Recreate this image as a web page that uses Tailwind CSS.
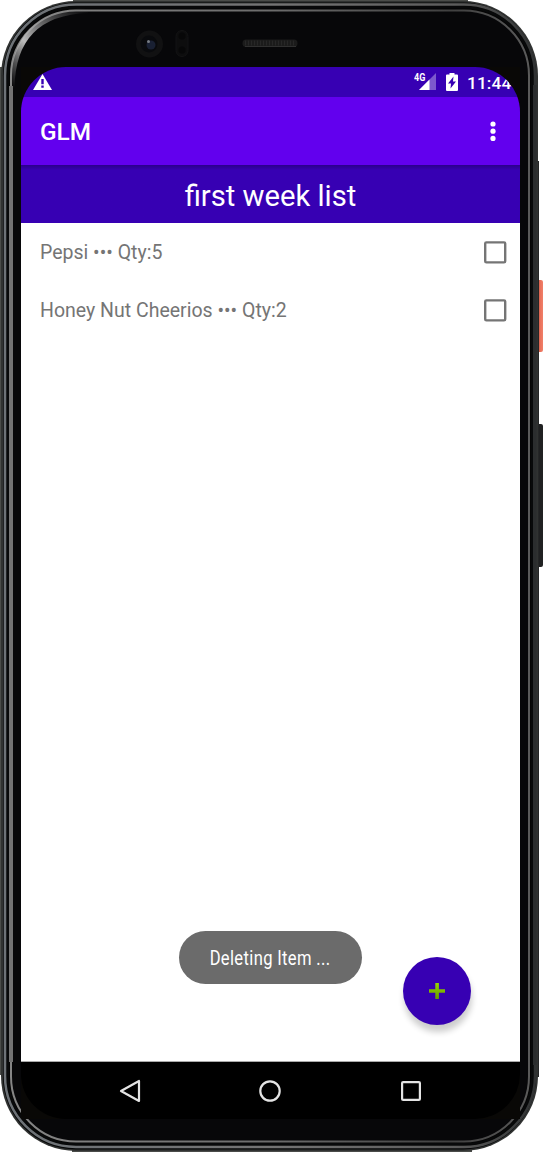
<!DOCTYPE html>
<html lang="en">
<head>
<meta charset="utf-8">
<title>GLM</title>
<script src="https://cdn.jsdelivr.net/npm/@tailwindcss/browser@4"></script>
</head>
<body class="bg-white">
<div class="relative w-[543px] h-[1152px] overflow-hidden font-['Roboto',sans-serif] px-[21px] pt-[67px]">
  <!-- Phone body -->
  <svg class="absolute left-0 top-0" width="543" height="1152" viewBox="0 0 543 1152" fill="none">
    <defs>
      <linearGradient id="rim"><stop offset="0" stop-color="#6d7277"/><stop offset=".5" stop-color="#747474"/><stop offset=".85" stop-color="#5c5c5c"/><stop offset="1" stop-color="#303233"/></linearGradient>
      <linearGradient id="inner"><stop offset="0" stop-color="#858585"/><stop offset=".5" stop-color="#6c6c6c"/><stop offset=".85" stop-color="#404040"/><stop offset="1" stop-color="#5a5a5a"/></linearGradient>
      <linearGradient id="glare" x1="15" y1="90" x2="85" y2="8" gradientUnits="userSpaceOnUse"><stop offset="0" stop-color="#888" stop-opacity="0"/><stop offset=".4" stop-color="#bbb"/><stop offset="1" stop-color="#777" stop-opacity="0"/></linearGradient>
      <linearGradient id="power"><stop offset="0" stop-color="#b94c3c"/><stop offset=".4" stop-color="#e96f59"/><stop offset="1" stop-color="#f08069"/></linearGradient>
    </defs>
    <path d="M538 280h3q2 0 2 2v68q0 2-2 2h-3z" fill="url(#power)"/>
    <path d="M538 424h3q2 0 2 2v139q0 2-2 2h-3z" fill="#202122"/>
    <path d="M0 67h5v1008H0zM73 0h395v3H73zM72 1149h400v3H72z" fill="#4a4c49"/>
    <path d="M534 161h5v916h-5z" fill="#252627"/>
    <rect x="1" y="1" width="537" height="1150" rx="75" fill="#303231"/>
    <rect x="3" y="2.500" width="533" height="1147" rx="73" fill="#050607"/>
    <rect x="5" y="4.500" width="530" height="1142.500" rx="71" fill="#080909" stroke="url(#rim)" stroke-width="2.500"/>
    <path d="M533.500 85v980" stroke="#2b2d2e" stroke-width="6"/>
    <rect x="8" y="7.500" width="524" height="1136.500" rx="68" fill="#050505" stroke="#08090a" stroke-width="2"/>
    <rect x="11" y="10.500" width="518" height="1131" rx="65" fill="#070709" stroke="url(#inner)" stroke-width="2"/>
    <path d="M11 86V1062" stroke="#737373" stroke-width="4"/>
    <path d="M12 88Q13 13 88 10.500" stroke="url(#glare)" stroke-width="5"/>
    <path d="M21 67h499v1052H21z" fill="#090806"/>
    <circle cx="149.500" cy="44" r="13.500" fill="#111112"/>
    <circle cx="149" cy="44" r="8.500" fill="#090a0d"/>
    <circle cx="151" cy="45" r="4.500" fill="#192033"/>
    <circle cx="148.500" cy="41.500" r="1.500" fill="#777c85"/>
    <rect x="176" y="30.500" width="12" height="26" rx="6" fill="#0d0d0e" stroke="#131314"/>
    <circle cx="182" cy="36" r="3.500" fill="#070708"/><circle cx="182" cy="50" r="3.500" fill="#070708"/>
    <rect x="242.500" y="39.500" width="55" height="7.500" rx="3.500" fill="#1b1b1b"/>
    <path d="M245 43h51" stroke="#272727" stroke-width="5" stroke-dasharray="1 2"/>
    <path d="M245 46.500h51" stroke="#303030"/>
  </svg>

  <!-- Screen -->
  <div class="relative flex flex-col w-[499px] h-[1052px] rounded-[45px] overflow-hidden">
    <div class="h-[30px] shrink-0 bg-[#3700b3] flex items-start">
      <svg class="ml-3 mt-[7px] shrink-0" width="19" height="16" viewBox="0 0 19 16"><path d="M9.500 0L19 16H0z" fill="#fff"/><path d="M8.300 5h2.400v5.200H8.300zM8.300 11.500h2.400v2.200H8.300z" fill="#3700b3"/></svg>
      <div class="relative ml-auto shrink-0 w-[22px] h-[30px]">
        <span class="absolute left-0 top-[6px] text-[10px] leading-[10px] font-bold text-white origin-left scale-x-90">4G</span>
        <svg class="absolute left-[5px] top-[6px]" width="17" height="18" viewBox="0 0 17 18"><path d="M17 0v17H0z" fill="#fff" opacity=".35"/><path d="M10.500 6.500V17H0z" fill="#fff"/></svg>
      </div>
      <svg class="ml-[10px] mt-[6px] shrink-0" width="12" height="18" viewBox="0 0 12 18"><path d="M3.500 0h5v1.500H11q1 0 1 1V17q0 1-1 1H1q-1 0-1-1V2.500q0-1 1-1h2.500z" fill="#fff"/><path d="M7.500 3.500L2 10.500h3L4.500 15.500 10 8.500H7z" fill="#3700b3"/></svg>
      <span class="ml-[9px] mt-[5px] shrink-0 w-[53px] text-[17.3px] leading-[22px] font-medium tracking-[0.1px] text-white whitespace-nowrap">11:44</span>
    </div>
    <div class="h-[68px] shrink-0 bg-[#6200ee] flex items-center justify-between pl-[19px] pr-6">
      <h1 class="text-[24.4px] leading-none font-medium text-white pt-0.5">GLM</h1>
      <svg width="6" height="20" viewBox="0 0 6 20" fill="#fff"><circle cx="3" cy="3" r="2.600"/><circle cx="3" cy="10.200" r="2.600"/><circle cx="3" cy="17.400" r="2.600"/></svg>
    </div>
    <div class="h-[58px] shrink-0 bg-[#3700b3] bg-linear-to-b from-[#2b008c] to-[#3700b3] to-[5px] flex items-center justify-center text-[29.2px] text-white pt-[5px]">first week list</div>
    <div class="flex-1 bg-white border-b border-[#aaa] text-[19.5px] text-[#757575]">
      <div class="h-[58px] flex items-center justify-between pl-[19px] pr-[13px]">
        <span class="pt-0.5">Pepsi ••• Qty:5</span>
        <svg width="23" height="23" viewBox="0 0 23 23" fill="none" stroke="#757575" stroke-width="2.400"><rect x="1.200" y="1.400" width="20" height="20" rx="1.200"/></svg>
      </div>
      <div class="h-[58px] flex items-center justify-between pl-[19px] pr-[13px]">
        <span class="pt-0.5">Honey Nut Cheerios ••• Qty:2</span>
        <svg width="23" height="23" viewBox="0 0 23 23" fill="none" stroke="#757575" stroke-width="2.400"><rect x="1.200" y="1.400" width="20" height="20" rx="1.200"/></svg>
      </div>
    </div>
    <div class="h-[57px] shrink-0 bg-black flex items-center justify-between pl-[98px] pr-[99px]">
      <svg width="22" height="24" viewBox="0 0 22 24" fill="none" stroke="#e4e4e4" stroke-width="2.200" stroke-linejoin="round"><path d="M20 2v20L2 12z"/></svg>
      <svg class="-ml-[2px]" width="22" height="22" viewBox="0 0 22 22" fill="none" stroke="#e4e4e4" stroke-width="2.200"><circle cx="11" cy="11" r="9.700"/></svg>
      <svg width="20" height="20" viewBox="0 0 20 20" fill="none" stroke="#e4e4e4" stroke-width="2.200"><rect x="1.100" y="1.100" width="17.800" height="17.800" rx="1"/></svg>
    </div>
    <!-- Toast -->
    <div class="absolute left-[158px] top-[864px] w-[183px] h-[53px] rounded-[26.5px] bg-[#6b6b6b] flex items-center justify-center text-white text-[19.5px] pt-0.5">
      <span class="whitespace-nowrap scale-x-85 tracking-[0.4px]">Deleting Item ...</span>
    </div>
    <!-- Add button -->
    <button class="absolute left-[382px] top-[890px] size-[68px] rounded-full bg-[#3700b3] shadow-[1px_7px_6px_rgba(0,0,0,0.2)] flex items-center justify-center" aria-label="Add">
      <svg width="16" height="16" viewBox="0 0 16 16"><defs><linearGradient id="plus" x2="0" y2="1"><stop stop-color="#96d900"/><stop offset="1" stop-color="#669900"/></linearGradient></defs><path d="M6.300 0h3.600v6.200H16v3.600H9.900V16H6.300V9.800H0V6.200h6.300z" fill="url(#plus)"/></svg>
    </button>
  </div>
</div>
</body>
</html>
